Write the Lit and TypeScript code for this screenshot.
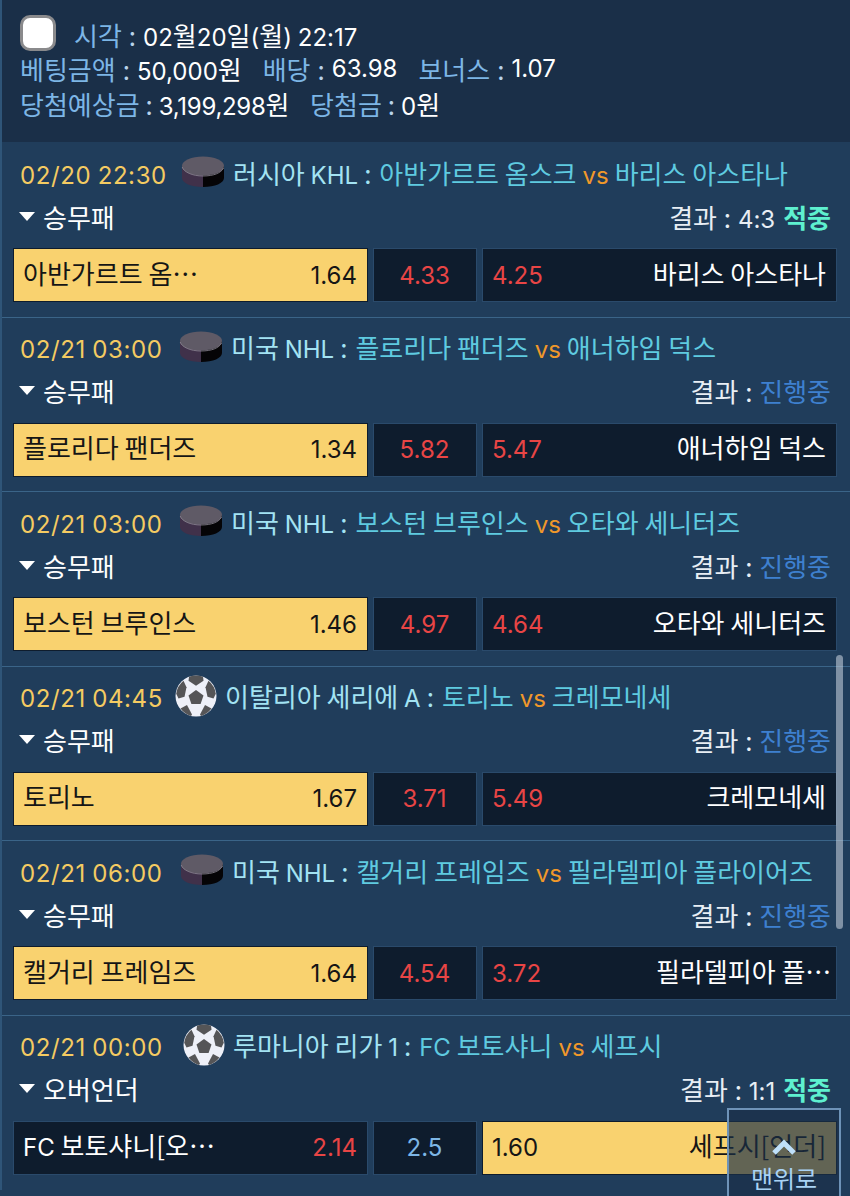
import { LitElement, html, css, svg } from "lit";
import { customElement } from "lit/decorators.js";

const puck = svg`<svg class="ic puck" viewBox="0 0 44 32" width="44" height="32">
  <path d="M1 10v12c0 5 9 9 21 9V10z" fill="#40314a"/>
  <path d="M22 10v21c12 0 21-4 21-9V10z" fill="#050406"/>
  <ellipse cx="22" cy="10" rx="21" ry="9.5" fill="#5f5a66"/>
  <path d="M1.2 11c1.5 5 10 9 20.8 9s18-3 20.600-8" fill="none" stroke="#8d8894" stroke-width=".8"/>
</svg>`;

const ball = svg`<svg class="ic ball" viewBox="0 0 42 42" width="42" height="42">
  <circle cx="21" cy="21" r="20.500" fill="#eef0f8"/>
  <g fill="#555557">
    <path d="M21 15l7.500 5.500-2.900 8.500h-9.200l-2.900-8.500z"/>
    <path d="M14 1.800a20.500 20.500 0 0 1 14 0l.5 4-7.500 5-7.500-5z"/>
    <path d="M33.500 5.700a20.500 20.500 0 0 1 7.300 13l-2.300 4.800-6-1.800-2-9.500z"/>
    <path d="M8.500 5.700a20.500 20.500 0 0 0-7.300 13l2.300 4.800 6-1.800 2-9.500z"/>
    <path d="M5.500 33.500l6.500-3.500 5 9.500-1 1.500a20.500 20.500 0 0 1-10.500-7.500z"/>
    <path d="M36.500 33.500l-6.500-3.500-5 9.500 1 1.500a20.500 20.500 0 0 0 10.500-7.500z"/>
  </g>
</svg>`;

/* Latin runs use a smaller Inter, Hangul stays in the CJK face at the body size. */
const t = (s: string) =>
  s.split(/([0-9A-Za-z.,:\/()]+)/).map((p, i) => (i % 2 ? html`<span class="lat">${p}</span>` : p));

type Game = {
  time: string; timeW: number; icon: "puck" | "ball"; league: string; home: string; away: string;
  market: string; score?: string; h: string; hOdd: string; mid: string; midBlue?: boolean; a: string; aOdd: string; pick: "home" | "away";
};

const games: Game[] = [
  { time: "02/20 22:30", timeW: 161, icon: "puck", league: "러시아 KHL", home: "아반가르트 옴스크", away: "바리스 아스타나", market: "승무패", score: "4:3", h: "아반가르트 옴스크", hOdd: "1.64", mid: "4.33", a: "바리스 아스타나", aOdd: "4.25", pick: "home" },
  { time: "02/21 03:00", timeW: 159, icon: "puck", league: "미국 NHL", home: "플로리다 팬더즈", away: "애너하임 덕스", market: "승무패", h: "플로리다 팬더즈", hOdd: "1.34", mid: "5.82", a: "애너하임 덕스", aOdd: "5.47", pick: "home" },
  { time: "02/21 03:00", timeW: 159, icon: "puck", league: "미국 NHL", home: "보스턴 브루인스", away: "오타와 세니터즈", market: "승무패", h: "보스턴 브루인스", hOdd: "1.46", mid: "4.97", a: "오타와 세니터즈", aOdd: "4.64", pick: "home" },
  { time: "02/21 04:45", timeW: 155, icon: "ball", league: "이탈리아 세리에 A", home: "토리노", away: "크레모네세", market: "승무패", h: "토리노", hOdd: "1.67", mid: "3.71", a: "크레모네세", aOdd: "5.49", pick: "home" },
  { time: "02/21 06:00", timeW: 160, icon: "puck", league: "미국 NHL", home: "캘거리 프레임즈", away: "필라델피아 플라이어즈", market: "승무패", h: "캘거리 프레임즈", hOdd: "1.64", mid: "4.54", a: "필라델피아 플라이어즈", aOdd: "3.72", pick: "home" },
  { time: "02/21 00:00", timeW: 163, icon: "ball", league: "루마니아 리가 1", home: "FC 보토샤니", away: "세프시", market: "오버언더", score: "1:1", h: "FC 보토샤니[오버]", hOdd: "2.14", mid: "2.5", midBlue: true, a: "세프시[언더]", aOdd: "1.60", pick: "away" },
];

@customElement("app-root")
export class AppRoot extends LitElement {
  static styles = css`
    :host {
      display: block; position: relative; width: 850px; height: 1196px; overflow: hidden;
      background: #203d5b; box-sizing: border-box;
      font-family: "Noto Sans CJK KR", sans-serif; font-size: 26px; color: #fff;
    }
    .lat { font-family: Inter, sans-serif; font-size: 24px; }
    .page { border-left: 2px solid #2f5578; }
    .head {
      height: 142px; box-sizing: border-box; background: #1a2f48; padding: 17px 0 0 18px;
      white-space: nowrap;
    }
    .line { display: flex; align-items: center; height: 34.500px; }
    .cb {
      width: 36px; height: 36px; box-sizing: border-box; border: 3px solid #8a8a8c; border-radius: 10px;
      background: #fff; margin: 0 18px 2px 0;
    }
    .k { color: #7db6e6; }
    .sep { color: #b9d3ea; margin: 0 7px; }
    .sep.n { margin: 0 6px; }
    .gap { margin-left: 21px; }
    .tight { letter-spacing: -.3px; }
    .card {
      height: 174.600px; box-sizing: border-box; border-top: 1px solid #3a6488; padding: 0 11px;
      white-space: nowrap;
    }
    .card.c0 { border-top: none; padding-top: 1px; }
    .title { display: flex; align-items: center; height: 60px; box-sizing: border-box; padding: 0 0 2px 7px; }
    .time { color: #f4cb62; letter-spacing: .6px; flex: none; }
    .ic { flex: none; margin-right: 8px; }
    .league { color: #a3e3f3; }
    .tn { color: #5fcbe0; }
    .colon { color: #a3e3f3; margin: 0 8px 0 6px; }
    .vs { color: #f0982a; margin: 0 6px; }
    .info { display: flex; justify-content: space-between; align-items: center; height: 28px; margin: -1px 0 18px; padding: 0 8px 0 6px; }
    .mk { display: flex; align-items: center; }
    .tri { width: 0; height: 0; border-left: 8px solid transparent; border-right: 8px solid transparent; border-top: 9px solid #fff; margin-right: 8px; }
    .res { color: #e8eef4; word-spacing: 1px; }
    .hit { color: #5ef0cf; font-weight: 700; margin-left: 8px; }
    .run { color: #3e80cf; }
    .bets { display: grid; grid-template-columns: 355px 104px 355px; gap: 5px; height: 54px; }
    .cell {
      display: flex; align-items: center; justify-content: space-between; box-sizing: border-box;
      height: 54px; padding: 0 10px 6px 9px; border: 1px solid #2a4a6b; background: #0e1c2d; min-width: 0;
    }
    .cell.mid { justify-content: center; }
    .cell.on { background: #f9d26f; border-color: #0e1c2d; color: #151515; }
    .name { overflow: hidden; text-overflow: ellipsis; white-space: nowrap; max-width: 192px; }
    .name.cut { max-width: 180px; margin-right: -10px; }
    .red { color: #e84545; }
    .blue { color: #7db6e6; }
    .scroll {
      position: absolute; left: 836px; top: 655px; width: 7px; height: 274px; border-radius: 4px;
      background: rgba(205, 215, 225, .55);
    }
    .top {
      position: absolute; left: 727px; top: 1108px; width: 114px; height: 100px; box-sizing: border-box;
      border: 2px solid #6e93b8; background: rgba(26, 47, 72, .68); color: #a9d3f5;
      display: flex; flex-direction: column; align-items: center; padding-top: 29px; font-size: 24px; line-height: 30px;
    }
    .top svg { display: block; margin-bottom: 8px; }
  `;

  private cell(name: string, odd: string, on: boolean, right: boolean) {
    const cut = right && name.length > 10;
    const n = html`<span class="name ${cut ? "cut" : ""}">${t(name)}</span>`;
    const o = html`<span class=${on ? "" : "red"}>${t(odd)}</span>`;
    return html`<div class="cell ${on ? "on" : ""}">${right ? html`${o}${n}` : html`${n}${o}`}</div>`;
  }

  render() {
    return html`
      <div class="page">
        <div class="head">
          <div class="line"><span class="cb"></span><span class="k">시각</span><span class="sep">:</span><span>${t("02")}월${t("20")}일${t("(")}월${t(")")} ${t("22:17")}</span></div>
          <div class="line"><span class="k">베팅금액</span><span class="sep">:</span><span>${t("50,000")}원</span><span class="k gap">배당</span><span class="sep">:</span>${t("63.98")}<span class="k gap">보너스</span><span class="sep">:</span>${t("1.07")}</div>
          <div class="line"><span class="k">당첨예상금</span><span class="sep n">:</span><span class="tight">${t("3,199,298")}원</span><span class="k gap">당첨금</span><span class="sep n">:</span><span>${t("0")}원</span></div>
        </div>
        ${games.map((g, i) => html`
          <div class="card c${i}">
            <div class="title">
              <span class="time" style="width:${g.timeW}px">${t(g.time)}</span>
              ${g.icon === "puck" ? puck : ball}
              <span class="league">${t(g.league)}</span><span class="colon">:</span>
              <span class="tn">${t(g.home)}</span><span class="vs">${t("vs")}</span><span class="tn">${t(g.away)}</span>
            </div>
            <div class="info">
              <span class="mk"><span class="tri"></span>${g.market}</span>
              <span class="res">결과 : ${g.score
                ? html`${t(g.score)}<span class="hit">적중</span>`
                : html`<span class="run">진행중</span>`}</span>
            </div>
            <div class="bets">
              ${this.cell(g.h, g.hOdd, g.pick === "home", false)}
              <div class="cell mid"><span class=${g.midBlue ? "blue" : "red"}>${t(g.mid)}</span></div>
              ${this.cell(g.a, g.aOdd, g.pick === "away", true)}
            </div>
          </div>`)}
      </div>
      <div class="scroll"></div>
      <div class="top">
        <svg width="26" height="16" viewBox="0 0 26 16"><path d="M3 14L13 4l10 10" fill="none" stroke="#bfe0fa" stroke-width="5"/></svg>
        <span>맨위로</span>
      </div>
    `;
  }
}
